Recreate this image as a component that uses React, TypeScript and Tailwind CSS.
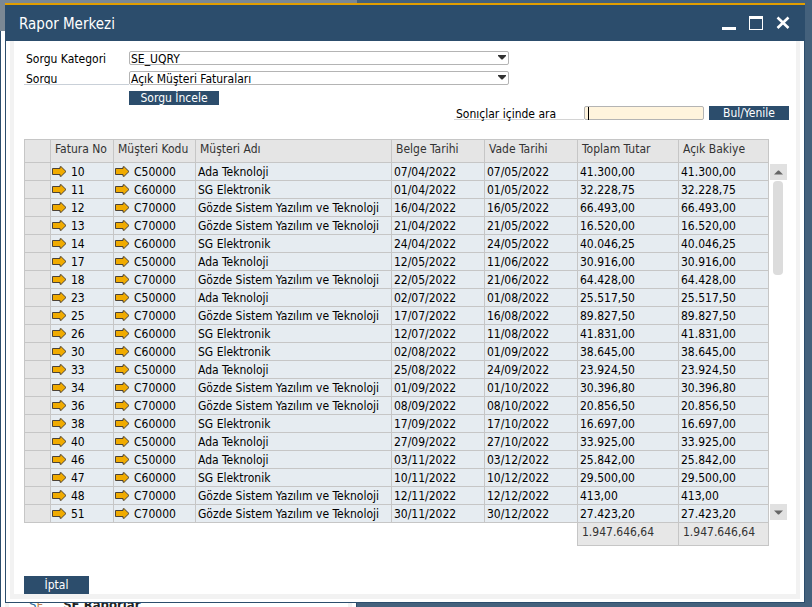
import React, { useState } from "react";

const FONT = "font-['DejaVu_Sans_Condensed','Noto_Sans',sans-serif]";

type Invoice = {
  no: number;
  code: string;
  date: string;
  due: string;
  total: string;
};

const NAMES: Record<string, string> = {
  C50000: "Ada Teknoloji",
  C60000: "SG Elektronik",
  C70000: "Gözde Sistem Yazılım ve Teknoloji",
};

const INVOICES: Invoice[] = [
  { no: 10, code: "C50000", date: "07/04/2022", due: "07/05/2022", total: "41.300,00" },
  { no: 11, code: "C60000", date: "01/04/2022", due: "01/05/2022", total: "32.228,75" },
  { no: 12, code: "C70000", date: "16/04/2022", due: "16/05/2022", total: "66.493,00" },
  { no: 13, code: "C70000", date: "21/04/2022", due: "21/05/2022", total: "16.520,00" },
  { no: 14, code: "C60000", date: "24/04/2022", due: "24/05/2022", total: "40.046,25" },
  { no: 17, code: "C50000", date: "12/05/2022", due: "11/06/2022", total: "30.916,00" },
  { no: 18, code: "C70000", date: "22/05/2022", due: "21/06/2022", total: "64.428,00" },
  { no: 23, code: "C50000", date: "02/07/2022", due: "01/08/2022", total: "25.517,50" },
  { no: 25, code: "C70000", date: "17/07/2022", due: "16/08/2022", total: "89.827,50" },
  { no: 26, code: "C60000", date: "12/07/2022", due: "11/08/2022", total: "41.831,00" },
  { no: 30, code: "C60000", date: "02/08/2022", due: "01/09/2022", total: "38.645,00" },
  { no: 33, code: "C50000", date: "25/08/2022", due: "24/09/2022", total: "23.924,50" },
  { no: 34, code: "C70000", date: "01/09/2022", due: "01/10/2022", total: "30.396,80" },
  { no: 36, code: "C70000", date: "08/09/2022", due: "08/10/2022", total: "20.856,50" },
  { no: 38, code: "C60000", date: "17/09/2022", due: "17/10/2022", total: "16.697,00" },
  { no: 40, code: "C50000", date: "27/09/2022", due: "27/10/2022", total: "33.925,00" },
  { no: 46, code: "C50000", date: "03/11/2022", due: "03/12/2022", total: "25.842,00" },
  { no: 47, code: "C60000", date: "10/11/2022", due: "10/12/2022", total: "29.500,00" },
  { no: 48, code: "C70000", date: "12/11/2022", due: "12/12/2022", total: "413,00" },
  { no: 51, code: "C70000", date: "30/11/2022", due: "30/12/2022", total: "27.423,20" },
];

const HEADERS = ["", "Fatura No", "Müşteri Kodu", "Müşteri Adı", "Belge Tarihi", "Vade Tarihi", "Toplam Tutar", "Açık Bakiye"];

function LinkArrow() {
  return (
    <svg width="15" height="11" viewBox="0 0 15 11" className="shrink-0" aria-hidden="true">
      <path d="M.5 2.5H8V.8h1.2L14 5.5 9.2 10.2H8V8.5H.5z" fill="#f0ab00" stroke="#4a4238" />
    </svg>
  );
}

function LinkCell({ children }: { children: React.ReactNode }) {
  return (
    <td className="border border-[#c6c6c6] p-0">
      <a href="#" className="flex items-center gap-1 pl-px">
        <LinkArrow />
        <span>{children}</span>
      </a>
    </td>
  );
}

function Cell({ children }: { children: React.ReactNode }) {
  return <td className="border border-[#c6c6c6] py-0 pr-0 pl-0.5">{children}</td>;
}

function Dropdown({ id, option }: { id: string; option: string }) {
  return (
    <div className="relative h-3.5 w-[380px] rounded-xs border border-[#b4b4b4] bg-white">
      <select
        id={id}
        className="-my-px block h-4 w-full appearance-none bg-transparent pl-px text-xs leading-4 text-black outline-none"
      >
        <option>{option}</option>
      </select>
      <svg width="8" height="5" viewBox="0 0 8 5" className="pointer-events-none absolute top-[3px] right-0.5">
        <path d="M0 0h8v1L4.5 4.5h-1L0 1z" fill="#333" />
      </svg>
    </div>
  );
}

export default function App() {
  const [query, setQuery] = useState("");

  return (
    <div className={`relative isolate flex min-h-screen flex-col overflow-hidden bg-[#44617c] pt-[3px] pr-[7px] pb-1 pl-[5px] text-xs text-black ${FONT}`}>
      {/* window lying behind the dialog */}
      <div className="absolute inset-y-0 left-0 -z-10 flex w-[357px] flex-col overflow-hidden">
        <div className="h-[31px] shrink-0 bg-[#7b8894]" />
        <div className="flex-1 border-x border-[#2c4d6c] bg-white px-1">
          <div className="h-full border-x-4 border-[#f2f2f2]" />
        </div>
        <div className="absolute -bottom-1 left-[29px] flex gap-5 text-[13px] leading-3">
          <span className="text-[#2c6c9c]">
            S<span className="text-[#c08050]">F</span>
          </span>
          <span className="font-bold text-[#222]">SF Raporlar</span>
        </div>
      </div>

      <main className="flex flex-1 flex-col border-t-2 border-[#e29e00] bg-white">
        <header className="flex h-9 items-center justify-between bg-[#2c4d6c] px-3.5 text-white">
          <h1 className="pt-0.5 text-[15px] leading-5">Rapor Merkezi</h1>
          <div className="flex gap-3">
            <button aria-label="Küçült">
              <svg width="15" height="15" viewBox="0 0 15 15">
                <path d="M0 11h14v3H0z" fill="#fff" />
              </svg>
            </button>
            <button aria-label="Büyüt">
              <svg width="15" height="15" viewBox="0 0 15 15" shapeRendering="crispEdges">
                <path d="M0 0h14v14H0zM1 3v10h12V3z" fill="#fff" fillRule="evenodd" />
              </svg>
            </button>
            <button aria-label="Kapat">
              <svg width="15" height="15" viewBox="0 0 15 15">
                <path d="M1.5 1.5l11 10.5M12.5 1.5l-11 10.5" stroke="#fff" strokeWidth="2.6" />
              </svg>
            </button>
          </div>
        </header>

        <div className="flex flex-1 flex-col border-x border-b border-[#2c4d6c] px-1 pb-[3px]">
          <div className="flex flex-1 flex-col border-x-4 border-b-[5px] border-[#f2f2f2] pt-2.5 pl-2.5">
            <div className="flex flex-col gap-1.5">
              <div className="flex">
                <label htmlFor="category" className="h-3.5 w-[105px] pl-0.5 leading-4">Sorgu Kategori</label>
                <Dropdown id="category" option="SE_UQRY" />
              </div>
              <div className="flex">
                <label htmlFor="report" className="h-3.5 w-[105px] overflow-hidden border-b border-[#c9d0d8] pl-0.5 leading-4">Sorgu</label>
                <Dropdown id="report" option="Açık Müşteri Faturaları" />
              </div>
              <button className="ml-[105px] h-3.5 w-[90px] bg-[#2c4d6c] leading-3.5 text-white">Sorgu İncele</button>
            </div>

            <div className="mt-px flex justify-end pr-[7px]">
              <label htmlFor="search" className="h-3.5 w-[130px] border-b border-[#d4d4d4] pl-0.5 leading-4">Sonıçlar içinde ara</label>
              <div className="relative mr-[5px] h-3.5 w-[120px]">
                <input
                  id="search"
                  value={query}
                  onChange={(e) => setQuery(e.target.value)}
                  className="block h-3.5 w-full rounded-xs border border-[#b4b4b4] bg-[#fff4dd] px-1 outline-none"
                />
                {!query && <span className="pointer-events-none absolute top-px bottom-0 left-1 w-px bg-black" />}
              </div>
              <button className="h-3.5 w-20 bg-[#2c4d6c] leading-3.5 text-white">Bul/Yenile</button>
            </div>

            <div className="mt-[19px] flex gap-px pr-[9px]">
              <table className="flex-1 table-fixed border-collapse leading-4 whitespace-nowrap">
                <colgroup>
                  <col className="w-[26px]" />
                  <col className="w-[63px]" />
                  <col className="w-[82px]" />
                  <col />
                  <col className="w-[93px]" />
                  <col className="w-[93px]" />
                  <col className="w-[101px]" />
                  <col className="w-[90px]" />
                </colgroup>
                <thead>
                  <tr className="h-[23px] bg-[#e5e5e5] text-left text-[#333]">
                    {HEADERS.map((h) => (
                      <th key={h} className="border border-[#c6c6c6] pt-0 pr-0 pb-1 pl-1 font-normal">{h}</th>
                    ))}
                  </tr>
                </thead>
                <tbody>
                  {INVOICES.map((row) => (
                    <tr key={row.no} className="h-[18px] bg-[#e6ecf1]">
                      <td className="border border-[#c6c6c6] bg-[#e5e5e5] p-0" />
                      <LinkCell>{row.no}</LinkCell>
                      <LinkCell>{row.code}</LinkCell>
                      <Cell>{NAMES[row.code]}</Cell>
                      <Cell>{row.date}</Cell>
                      <Cell>{row.due}</Cell>
                      <Cell>{row.total}</Cell>
                      <Cell>{row.total}</Cell>
                    </tr>
                  ))}
                </tbody>
                <tfoot>
                  <tr className="h-[23px] text-[#333]">
                    <td colSpan={6} className="p-0" />
                    <td className="border border-[#c6c6c6] bg-[#e7e7e7] pt-0 pr-0 pb-1 pl-1">1.947.646,64</td>
                    <td className="border border-[#c6c6c6] bg-[#e7e7e7] pt-0 pr-0 pb-1 pl-1">1.947.646,64</td>
                  </tr>
                </tfoot>
              </table>

              <div className="flex w-[17px] flex-col pt-[25px] pb-[26px]">
                <button aria-label="Yukarı" className="flex h-4 items-center justify-center bg-[#e1e1e1]">
                  <svg width="9" height="5" viewBox="0 0 9 5">
                    <path d="M0 4.5h9L5 .5H4z" fill="#666" />
                  </svg>
                </button>
                <div className="flex-1 pt-px pl-[3px]">
                  <div className="h-[94px] w-2.5 rounded bg-[#dcdcdc]" />
                </div>
                <button aria-label="Aşağı" className="flex h-4 items-center justify-center bg-[#e1e1e1]">
                  <svg width="9" height="5" viewBox="0 0 9 5">
                    <path d="M0 .5h9L5 4.5H4z" fill="#666" />
                  </svg>
                </button>
              </div>
            </div>

            <button className="mt-auto h-[18px] w-[65px] bg-[#2c4d6c] leading-[18px] text-white">İptal</button>
          </div>
        </div>
      </main>
    </div>
  );
}
